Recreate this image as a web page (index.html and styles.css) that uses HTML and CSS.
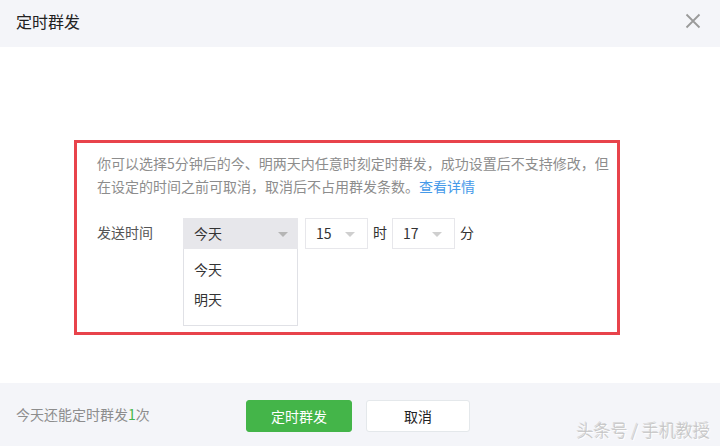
FILE: index.html
```html
<!DOCTYPE html>
<html lang="zh">
  <head>
    <meta charset="UTF-8" />
    <title>定时群发</title>
    <link rel="stylesheet" href="styles.css">
  </head>
  <body>
    <div class="dialog">
      <div class="dialog-hd">
        <h3>定时群发</h3>
        <a class="close" href="javascript:;">
          <svg width="16" height="16" viewBox="0 0 16 16">
            <path d="M1.5 1.5 L14.5 14.5 M14.5 1.5 L1.5 14.5" stroke="#9a9a9a" stroke-width="1.8" fill="none" />
          </svg>
        </a>
      </div>

      <div class="dialog-bd">
        <div class="mark">
          <p class="tips">
            你可以选择5分钟后的今、明两天内任意时刻定时群发，成功设置后不支持修改，但<br />
            在设定的时间之前可取消，取消后不占用群发条数。<a href="javascript:;">查看详情</a>
          </p>
          <div class="form-row">
            <label>发送时间</label>
            <div class="select select-day open">
              <div class="select-hd">今天<i class="arrow"></i></div>
              <ul class="select-list">
                <li>今天</li>
                <li>明天</li>
              </ul>
            </div>
            <div class="select select-num">
              <div class="select-hd">15<i class="arrow"></i></div>
            </div>
            <span class="unit">时</span>
            <div class="select select-num">
              <div class="select-hd">17<i class="arrow"></i></div>
            </div>
            <span class="unit">分</span>
          </div>
        </div>
      </div>

      <div class="dialog-ft">
        <span class="remain">今天还能定时群发<em>1</em>次</span>
        <button class="btn btn-primary">定时群发</button>
        <button class="btn btn-default">取消</button>
        <span class="watermark">头条号 / 手机教授</span>
      </div>
    </div>
  </body>
</html>
```

FILE: styles.css
```css
body {
  margin: 0;
  font-family: "Microsoft YaHei", "Noto Sans CJK SC", sans-serif;
  font-size: 14px;
  color: #333;
}
.dialog {
  width: 720px;
  height: 446px;
  position: relative;
  background: #fff;
}
.dialog-hd {
  height: 47px;
  background: #f4f5f9;
  display: flex;
  align-items: center;
  justify-content: space-between;
  padding: 0 19px 0 16px;
}
.dialog-hd h3 {
  margin: 0 0 5px;
  font-size: 16px;
  font-weight: normal;
  color: #222;
}
.close {
  display: flex;
  margin-bottom: 5px;
}
.dialog-bd {
  height: 336px;
  box-sizing: border-box;
  padding: 93px 0 0 74px;
}
.mark {
  width: 546px;
  height: 195px;
  box-sizing: border-box;
  border: 3px solid #e8434b;
  padding: 9px 4px 9px 20px;
}
.tips {
  margin: 0;
  line-height: 23px;
  color: #8d8d8d;
  white-space: nowrap;
}
.tips a {
  color: #459ae9;
  text-decoration: none;
}
.form-row {
  display: flex;
  align-items: flex-start;
  margin-top: 20px;
}
.form-row label {
  width: 86px;
  line-height: 29px;
  color: #555;
}
.select {
  position: relative;
}
.select-hd {
  height: 31px;
  box-sizing: border-box;
  border: 1px solid #e7e7eb;
  line-height: 29px;
  padding-left: 10px;
  position: relative;
  color: #333;
}
.select-day {
  width: 115px;
  margin-right: 7px;
}
.select-day .select-hd {
  background: #e7e7eb;
}
.select-num {
  width: 63px;
}
.arrow {
  position: absolute;
  top: 13px;
  right: 9px;
  border-left: 5px solid transparent;
  border-right: 5px solid transparent;
  border-top: 5px solid #b5b5b5;
}
.select-num .arrow {
  right: 12px;
  border-top-color: #cfcfcf;
}
.select-list {
  position: absolute;
  top: 31px;
  left: 0;
  right: 0;
  margin: 0;
  padding: 5px 0 11px;
  list-style: none;
  background: #fff;
  border: 1px solid #e0e1e6;
  border-top: none;
}
.select-list li {
  line-height: 30px;
  padding-left: 10px;
}
.unit {
  line-height: 29px;
  margin: 0 5px;
}
.dialog-ft {
  height: 63px;
  background: #f4f5f9;
  display: flex;
  align-items: center;
  padding: 2px 16px 0;
  box-sizing: border-box;
}
.remain {
  width: 230px;
  color: #8d8d8d;
  margin-top: -3px;
}
.remain em {
  font-style: normal;
  color: #44b549;
}
.btn {
  height: 32px;
  border-radius: 3px;
  font-family: inherit;
  font-size: 14px;
  padding: 0;
}
.btn-primary {
  width: 106px;
  background: #44b549;
  border: 1px solid #44b549;
  color: #fff;
  margin-right: 14px;
}
.btn-default {
  width: 104px;
  background: #fff;
  border: 1px solid #e4e8eb;
  color: #222;
}
.watermark {
  position: absolute;
  right: 10px;
  bottom: 4px;
  font-size: 17px;
  font-weight: 300;
  color: #c4c4c4;
  text-shadow: 1px 1px 0 #fff, -1px -1px 0 #d6d6d6;
}
```
